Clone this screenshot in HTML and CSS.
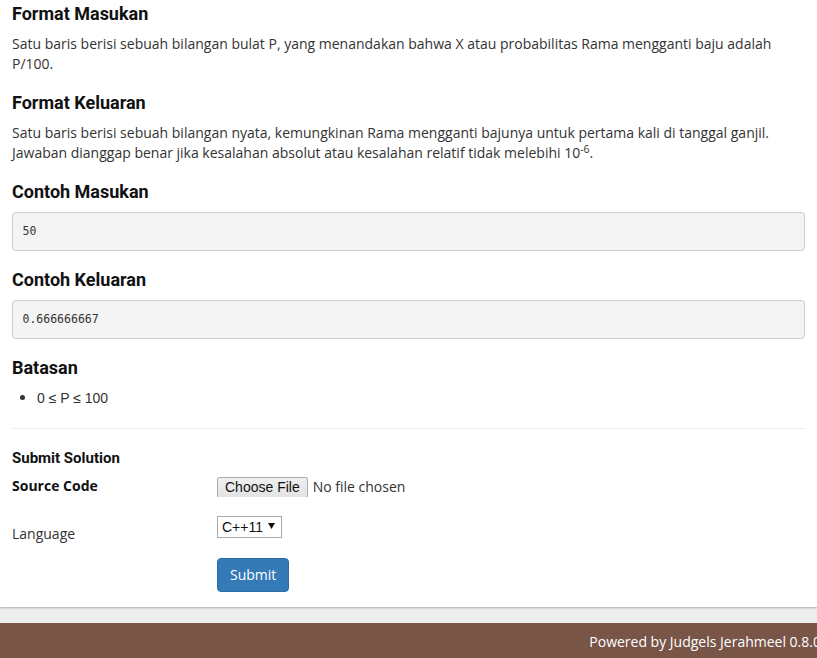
FILE: index.html
```html
<!DOCTYPE html>
<html lang="id">
<head>
<meta charset="utf-8">
<title>Problem</title>
<link rel="stylesheet" href="styles.css">
</head>
<body>
<main class="panel">
  <h3 class="section-title">Format Masukan</h3>
  <p class="text">Satu baris berisi sebuah bilangan bulat P, yang menandakan bahwa X atau probabilitas Rama mengganti baju adalah P/100.</p>

  <h3 class="section-title">Format Keluaran</h3>
  <p class="text">Satu baris berisi sebuah bilangan nyata, kemungkinan Rama mengganti bajunya untuk pertama kali di tanggal ganjil. Jawaban dianggap benar jika kesalahan absolut atau kesalahan relatif tidak melebihi 10<sup class="sup">-6</sup>.</p>

  <h3 class="section-title">Contoh Masukan</h3>
  <pre class="sample">50</pre>

  <h3 class="section-title">Contoh Keluaran</h3>
  <pre class="sample">0.666666667</pre>

  <h3 class="section-title">Batasan</h3>
  <ul class="limits">
    <li>0 ≤ P ≤ 100</li>
  </ul>

  <hr class="divider">

  <h4 class="submit-title">Submit Solution</h4>
  <form class="submit-form">
    <div class="form-row">
      <label class="form-label strong" for="src">Source Code</label>
      <div class="form-control-cell"><input class="file-input" id="src" type="file"></div>
    </div>

    <div class="form-row tight">
      <label class="form-label padded" for="lang">Language</label>
      <div class="form-control-cell">
        <span class="select-wrap">
          <select class="lang-select" id="lang"><option>C++11</option></select>
          <svg class="select-arrow" width="7" height="6" viewBox="0 0 7 6"><path d="M0 0H7L3.5 6Z" fill="#111"/></svg>
        </span>
      </div>
    </div>

    <div class="form-row last">
      <div class="form-label"></div>
      <div class="form-control-cell"><button class="btn-primary" type="button">Submit</button></div>
    </div>
  </form>
</main>
<footer class="footer">
  <span class="footer-text">Powered by Judgels Jerahmeel 0.8.0</span>
</footer>
</body>
</html>
```

FILE: styles.css
```css
html, body {
  margin: 0;
  padding: 0;
}
body {
  background: #eeeeee;
  font-family: "Open Sans", "Liberation Sans", sans-serif;
  font-size: 14px;
  line-height: 20px;
  color: #333333;
  overflow: hidden;
}
.panel {
  background: #ffffff;
  padding: 2px 12px 15px;
  box-shadow: 0 1px 2px rgba(0, 0, 0, 0.28);
}
.section-title {
  font-family: Roboto, "Liberation Sans", sans-serif;
  font-weight: 700;
  font-size: 18px;
  line-height: 24px;
  color: #111111;
  margin: 0 0 8px;
}
.text {
  margin: 0 0 17px;
}
.sup {
  font-size: 75%;
  line-height: 0;
  vertical-align: baseline;
  position: relative;
  top: -0.5em;
}
.sample {
  margin: 0 0 17px;
  padding: 9px 9.5px;
  font-family: "DejaVu Sans Mono", "Liberation Mono", monospace;
  font-size: 11.5px;
  line-height: 19px;
  color: #333333;
  background: #f4f4f4;
  border: 1px solid #cccccc;
  border-radius: 4px;
}
.limits {
  margin: 0 0 20px;
  padding-left: 25px;
  font-family: "Liberation Sans", Arial, sans-serif;
  font-size: 14px;
  list-style: disc;
}
.limits li::marker {
  font-size: 17px;
}
.divider {
  margin: 0 0 19px;
  border: 0;
  border-top: 1px solid #eeeeee;
}
.submit-title {
  font-family: Roboto, "Liberation Sans", sans-serif;
  font-weight: 700;
  font-size: 15px;
  line-height: 20px;
  color: #111111;
  margin: 0 0 8px;
}
.form-row {
  display: grid;
  grid-template-columns: 205px 1fr;
  margin-bottom: 19px;
}
.form-row.tight {
  margin-bottom: 15px;
}
.form-row.last {
  margin-bottom: 0;
}
.form-label {
  color: #333333;
}
.form-label.strong {
  font-weight: 700;
  color: #111111;
}
.form-label.padded {
  padding-top: 8px;
  line-height: 19px;
}
.form-control-cell {
  display: flex;
  align-items: flex-start;
}
.file-input {
  font-family: "Open Sans", sans-serif;
  font-size: 14px;
  color: #333333;
  line-height: 21px;
  height: 21px;
  padding: 0;
}
.file-input::file-selector-button {
  font-family: "Liberation Sans", Arial, sans-serif;
  font-size: 14px;
  line-height: 17px;
  height: 21px;
  padding: 0 7px;
  margin: 0 5px 0 0;
  color: #111111;
  background: linear-gradient(#f0f0f0, #e3e3e3);
  border: 1px solid #adadad;
  border-radius: 2px;
}
.select-wrap {
  display: inline-flex;
  align-items: center;
  height: 20px;
  border: 1px solid #a9a9a9;
  background: #ffffff;
}
.lang-select {
  appearance: none;
  -webkit-appearance: none;
  border: 0;
  background: transparent;
  font-family: "Liberation Sans", Arial, sans-serif;
  font-size: 14px;
  color: #111111;
  padding: 0 0 0 4px;
  margin: 0;
  height: 20px;
  outline: none;
}
.select-arrow {
  margin: 0 6px 2px 5px;
}
.btn-primary {
  font-family: "Open Sans", sans-serif;
  font-size: 14px;
  line-height: 20px;
  padding: 6px 12px;
  color: #ffffff;
  background: #337ab7;
  border: 1px solid #2e6da4;
  border-radius: 4px;
}
.footer {
  margin-top: 16px;
  background: #795548;
  display: flex;
  justify-content: flex-end;
  padding: 9px 0 20px;
}
.footer-text {
  color: #ffffff;
  white-space: nowrap;
  margin-right: -4px;
}
```
